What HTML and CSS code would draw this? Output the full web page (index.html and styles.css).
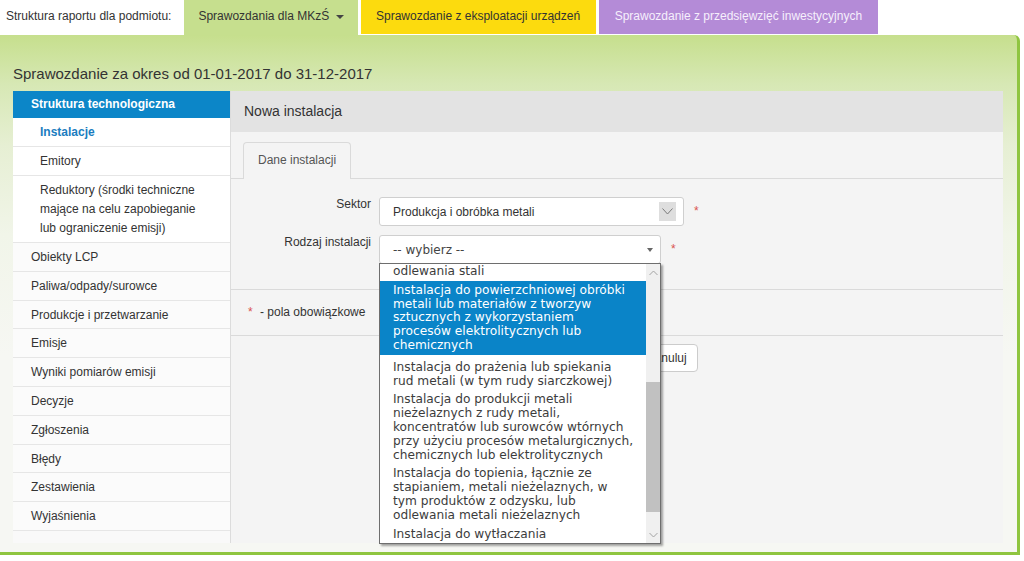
FILE: index.html
```html
<!DOCTYPE html>
<html lang="pl">
<head>
<meta charset="utf-8">
<title>Sprawozdanie</title>
<link rel="stylesheet" href="styles.css">
</head>
<body>
<div class="topbar">
  <span class="topbar-label">Struktura raportu dla podmiotu:</span>
  <div class="tab tab-green">Sprawozdania dla MKzŚ <span class="caret"></span></div>
  <div class="tab tab-yellow">Sprawozdanie z eksploatacji urządzeń</div>
  <div class="tab tab-purple">Sprawozdanie z przedsięwzięć inwestycyjnych</div>
</div>
<div class="container">
  <h1 class="period">Sprawozdanie za okres od 01-01-2017 do 31-12-2017</h1>
  <div class="main">
    <nav class="sidebar">
      <div class="side-head">Struktura technologiczna</div>
      <div class="side-sub active">Instalacje</div>
      <div class="side-sub">Emitory</div>
      <div class="side-sub">Reduktory (środki techniczne<br>mające na celu zapobieganie<br>lub ograniczenie emisji)</div>
      <div class="side-item">Obiekty LCP</div>
      <div class="side-item">Paliwa/odpady/surowce</div>
      <div class="side-item">Produkcje i przetwarzanie</div>
      <div class="side-item">Emisje</div>
      <div class="side-item">Wyniki pomiarów emisji</div>
      <div class="side-item">Decyzje</div>
      <div class="side-item">Zgłoszenia</div>
      <div class="side-item">Błędy</div>
      <div class="side-item">Zestawienia</div>
      <div class="side-item">Wyjaśnienia</div>
    </nav>
    <section class="panel">
      <div class="panel-head">Nowa instalacja</div>
      <div class="ptabs"><div class="ptab">Dane instalacji</div></div>
      <div class="form">
        <div class="row">
          <label class="lbl">Sektor</label>
          <div class="select sel-sektor">
            <span>Produkcja i obróbka metali</span>
            <span class="sel-btn"><svg width="11" height="7" viewBox="0 0 11 7"><polyline points="0.5,0.5 5.5,6 10.5,0.5" fill="none" stroke="#7a7a7a" stroke-width="1"/></svg></span>
          </div>
          <span class="req">*</span>
        </div>
        <div class="row">
          <label class="lbl">Rodzaj instalacji</label>
          <div class="select sel-rodzaj">
            <span>-- wybierz --</span>
            <span class="tri"></span>
            <div class="listbox">
              <div class="options">
                <div class="opt first">Instalacja do produkcji surówki lub stali<br>(wytop pierwotny lub wtórny), w tym<br>odlewania stali</div>
                <div class="opt selected">Instalacja do powierzchniowej obróbki<br>metali lub materiałów z tworzyw<br>sztucznych z wykorzystaniem<br>procesów elektrolitycznych lub<br>chemicznych</div>
                <div class="opt">Instalacja do prażenia lub spiekania<br>rud metali (w tym rudy siarczkowej)</div>
                <div class="opt">Instalacja do produkcji metali<br>nieżelaznych z rudy metali,<br>koncentratów lub surowców wtórnych<br>przy użyciu procesów metalurgicznych,<br>chemicznych lub elektrolitycznych</div>
                <div class="opt">Instalacja do topienia, łącznie ze<br>stapianiem, metali nieżelaznych, w<br>tym produktów z odzysku, lub<br>odlewania metali nieżelaznych</div>
                <div class="opt">Instalacja do wytłaczania</div>
              </div>
              <div class="scrollbar">
                <div class="sb-btn"><svg width="9" height="6" viewBox="0 0 9 6"><polyline points="0.5,5 4.5,1 8.5,5" fill="none" stroke="#a3a3a3" stroke-width="1"/></svg></div>
                <div class="sb-thumb"></div>
                <div class="sb-fill"></div>
                <div class="sb-btn"><svg width="9" height="6" viewBox="0 0 9 6"><polyline points="0.5,1 4.5,5 8.5,1" fill="none" stroke="#a3a3a3" stroke-width="1"/></svg></div>
              </div>
            </div>
          </div>
          <span class="req">*</span>
        </div>
      </div>
      <div class="legend"><span class="req-inline">*</span> - pola obowiązkowe</div>
      <div class="buttons">
        <button class="btn">Zapisz</button>
        <button class="btn">Anuluj</button>
      </div>
    </section>
  </div>
</div>
</body>
</html>
```
FILE: styles.css
```css
* { box-sizing: border-box; }
body {
  margin: 0;
  font-family: "Liberation Sans", Arial, sans-serif;
  font-size: 12px;
  color: #333;
  background: #fff;
}
.topbar {
  display: flex;
  height: 35px;
  padding-left: 6px;
  gap: 3px;
}
.topbar-label {
  line-height: 33px;
  margin-right: 10px;
}
.tab {
  padding: 0 14px;
  line-height: 33px;
  white-space: nowrap;
}
.tab-green { background: #c6df8e; }
.tab-yellow { background: #fcdb0e; height: 34px; padding: 0 15.5px; }
.tab-purple { background: #b48bd7; color: #f6effc; height: 34px; padding: 0 16px; }
.caret {
  display: inline-block;
  width: 0;
  height: 0;
  margin-left: 3px;
  vertical-align: middle;
  border-left: 4px solid transparent;
  border-right: 4px solid transparent;
  border-top: 4px solid #444;
}
.container {
  width: 1020px;
  padding: 29px 14px 9px 13px;
  background: linear-gradient(#c6df8d 0px, #d7e8b5 50px, #e6efd3 110px, #f1f5e9 200px, #f6f7f3 320px);
  border-right: 3px solid #8fc540;
  border-bottom: 3px solid #8fc540;
  border-top-right-radius: 6px;
}
.period {
  margin: 0 0 7px;
  font-size: 15px;
  font-weight: normal;
  line-height: 20px;
  color: #333;
}
.main {
  display: flex;
  height: 452px;
}
.sidebar {
  width: 217px;
  flex: none;
  background: #f9f9f9;
}
.side-head {
  background: #0c86c8;
  color: #fff;
  font-weight: bold;
  padding-left: 18px;
  height: 27px;
  line-height: 27px;
}
.side-sub {
  background: #fff;
  padding: 5px 0 4px 27px;
  line-height: 19px;
  border-bottom: 1px solid #e6e6e6;
}
.side-sub.active {
  color: #1b7dc0;
  font-weight: bold;
}
.side-item {
  background: #fbfbfb;
  padding: 5px 0 4px 18px;
  line-height: 18.8px;
  border-bottom: 1px solid #e6e6e6;
}
.panel {
  flex: 1;
  background: #f4f4f4;
  border-left: 1px solid #dcdcdc;
  display: flex;
  flex-direction: column;
}
.panel-head {
  height: 41px;
  line-height: 41px;
  padding-left: 13px;
  background: #e3e3e3;
  font-size: 14px;
}
.ptabs {
  padding: 10px 0 0 12px;
  border-bottom: 1px solid #dadada;
  display: flex;
}
.ptab {
  height: 37px;
  line-height: 35px;
  padding: 0 14px;
  border: 1px solid #dadada;
  border-bottom: none;
  border-radius: 4px 4px 0 0;
  background: #f4f4f4;
  color: #555;
  margin-bottom: -1px;
}
.form {
  padding: 18px 0 25px;
  border-bottom: 1px solid #dadada;
  display: flex;
  flex-direction: column;
  gap: 9px;
}
.row {
  display: flex;
  align-items: flex-start;
}
.lbl {
  width: 140px;
  margin-right: 8px;
  text-align: right;
  line-height: 15px;
  color: #333;
}
.select {
  position: relative;
  height: 29px;
  background: #fff;
  border: 1px solid #cfcfcf;
  border-radius: 3px;
  display: flex;
  align-items: center;
  justify-content: space-between;
}
.sel-sektor {
  width: 305px;
  padding: 0 7px 0 13px;
}
.sel-btn {
  width: 17px;
  height: 19px;
  background: #dedede;
  display: flex;
  align-items: center;
  justify-content: center;
}
.sel-rodzaj {
  width: 282px;
  padding: 0 7px 0 13px;
  font-family: "DejaVu Sans", Verdana, sans-serif;
  font-size: 12px;
  color: #444;
}
.tri {
  width: 0;
  height: 0;
  border-left: 3.5px solid transparent;
  border-right: 3.5px solid transparent;
  border-top: 4px solid #666;
}
.req {
  color: #d9534f;
  line-height: 29px;
  margin-left: 10px;
}
.listbox {
  position: absolute;
  top: 100%;
  left: -1px;
  width: 282px;
  height: 281px;
  background: #fff;
  border: 1px solid #6e6e6e;
  box-shadow: 2px 2px 2px rgba(0, 0, 0, 0.35);
  display: flex;
  z-index: 10;
  font-family: "DejaVu Sans", Verdana, sans-serif;
  font-size: 12.2px;
  color: #3c3c3c;
}
.options {
  width: 266px;
  overflow: hidden;
}
.opt {
  padding: 2.5px 0 2.5px 13px;
  line-height: 13.8px;
  white-space: nowrap;
}
.opt.first { margin-top: -29px; }
.opt.selected {
  background: #0a84c8;
  color: #fff;
  margin-bottom: 3px;
}
.scrollbar {
  width: 14px;
  background: #f0f0f0;
  display: flex;
  flex-direction: column;
}
.sb-btn {
  height: 17px;
  display: flex;
  align-items: center;
  justify-content: center;
}
.sb-thumb {
  margin-top: 101px;
  height: 130px;
  background: #c1c1c1;
}
.sb-fill { flex: 1; }
.legend {
  height: 46px;
  line-height: 45px;
  padding-left: 17px;
  border-bottom: 1px solid #dadada;
}
.req-inline {
  color: #d9534f;
  margin-right: 4px;
}
.buttons {
  display: flex;
  gap: 5px;
  padding: 8px 0 0 349px;
}
.btn {
  height: 28px;
  padding: 0 10px;
  font-family: "Liberation Sans", Arial, sans-serif;
  font-size: 12px;
  color: #333;
  background: #fff;
  border: 1px solid #cccccc;
  border-radius: 4px;
}
```
